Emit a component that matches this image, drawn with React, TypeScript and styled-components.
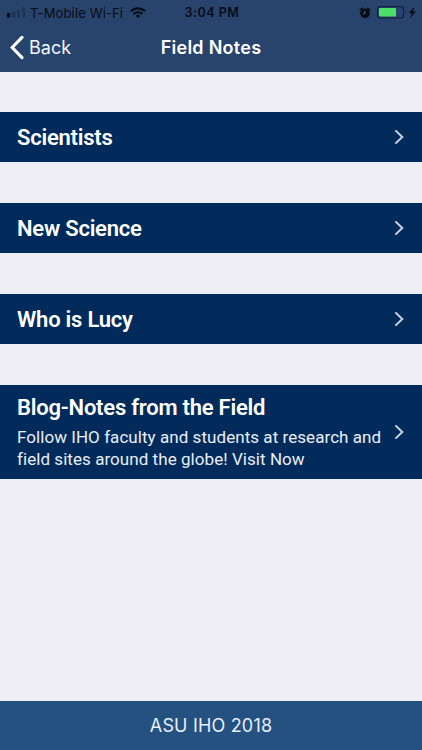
import React from "react";
import styled, { createGlobalStyle } from "styled-components";

const GlobalStyle = createGlobalStyle`
  * { box-sizing: border-box; }
  body { margin: 0; background: #efeef4; }
`;

const Screen = styled.div`
  display: flex;
  flex-direction: column;
  width: 422px;
  height: 750px;
  overflow: hidden;
  background: #efeef4;
  font-family: Roboto, sans-serif;
`;

const Header = styled.header`
  height: 72px;
  flex: none;
  background: #28436c;
  font-family: Inter, sans-serif;
`;

const StatusBar = styled.div`
  display: grid;
  grid-template-columns: 1fr auto 1fr;
  align-items: center;
  height: 24px;
  padding: 0 5px 0 7px;
  color: #070c16;
  font-size: 13px;
  line-height: 24px;
  white-space: nowrap;
`;

const Carrier = styled.div`
  display: flex;
  align-items: center;
  gap: 4px;
  letter-spacing: 0.14px;

  svg:last-child {
    margin-left: 3px;
  }
`;

const Clock = styled.div`
  padding-top: 1px;
  font-weight: 600;
  font-size: 12.5px;
  letter-spacing: 0.5px;
`;

const StatusIcons = styled.div`
  display: flex;
  align-items: center;
  justify-content: flex-end;
`;

const NavBar = styled.div`
  display: grid;
  grid-template-columns: 1fr auto 1fr;
  align-items: center;
  height: 46px;
  padding: 0 9px;
  color: #fff;
`;

const BackButton = styled.div`
  display: flex;
  align-items: center;
  gap: 5px;
  font-size: 18px;
  color: #f2f6ff;
  letter-spacing: 0.05px;
`;

const Title = styled.div`
  font-size: 18px;
  font-weight: 600;
  letter-spacing: 0.26px;
`;

const List = styled.main`
  flex: 1;
  display: flex;
  flex-direction: column;
  gap: 41px;
  padding-top: 39.5px;
`;

const Row = styled.div<{ $tall?: boolean }>`
  display: flex;
  align-items: center;
  justify-content: space-between;
  height: ${(p) => (p.$tall ? "94px" : "50px")};
  flex: none;
  padding: ${(p) => (p.$tall ? "0 18px 0 17px" : "1px 18px 0 17px")};
  background: #022b5b;
  color: #fff;
`;

const RowText = styled.div<{ $tall?: boolean }>`
  padding-top: ${(p) => (p.$tall ? "0" : "2px")};
`;

const Heading = styled.div`
  font-size: 22px;
  font-weight: 600;
  line-height: 28px;
  letter-spacing: -0.23px;
  white-space: nowrap;
`;

const Detail = styled.div`
  margin-top: 4px;
  font-size: 17px;
  line-height: 22px;
  letter-spacing: 0.055px;
  color: #e9eef8;
  white-space: nowrap;
`;

const Footer = styled.footer`
  height: 49px;
  flex: none;
  display: flex;
  align-items: center;
  justify-content: center;
  background: #255180;
  color: #e6effa;
  font-family: Inter, sans-serif;
  font-size: 18px;
  letter-spacing: 0.18px;
`;

const Signal = () => (
  <svg width="19" height="11" viewBox="0 0 19 11">
    <rect x="0" y="6" width="3.2" height="4.4" rx="0.6" fill="#070c16" />
    <rect x="5" y="4.5" width="3.2" height="6" rx="0.6" fill="#1e3558" />
    <rect x="10" y="2.5" width="3.2" height="8" rx="0.6" fill="#1e3558" />
    <rect x="15" y="0" width="3.2" height="10.5" rx="0.6" fill="#1e3558" />
  </svg>
);

const Wifi = () => (
  <svg width="16" height="12" viewBox="0 0 16 12" fill="none" stroke="#070c16" strokeWidth="2.1">
    <path d="M1 4.2a10 10 0 0 1 14 0" />
    <path d="M3.6 7.1a6.3 6.3 0 0 1 8.8 0" />
    <path d="M8 11.1 5.8 8.9a3.1 3.1 0 0 1 4.4 0Z" fill="#070c16" stroke="none" />
  </svg>
);

const Alarm = () => (
  <svg width="12" height="12" viewBox="0 0 12 12">
    <circle cx="6" cy="6.3" r="4.8" fill="#070c16" />
    <path d="M1.2 3 3.2 1.2M8.8 1.2l2 1.8" stroke="#070c16" strokeWidth="1.5" strokeLinecap="round" />
    <path d="M6 3.8v2.9H4.2" fill="none" stroke="#5c7395" strokeWidth="0.9" />
  </svg>
);

const Battery = () => (
  <svg width="46" height="13" viewBox="0 0 46 13">
    <rect x="6.6" y="0.6" width="25.8" height="11.4" rx="2.6" fill="none" stroke="#12223e" strokeWidth="1.1" />
    <rect x="8" y="2" width="17" height="8.6" rx="1" fill="#4de069" />
    <path d="M34 4.5q1.7 2 0 4Z" fill="#12223e" />
    <path d="m43.3 1-5.4 6h2.7l-1.4 5 5.6-6.4h-2.8Z" fill="#070c16" />
  </svg>
);

const BackChevron = () => (
  <svg width="15" height="25" viewBox="0 0 15 25" fill="none" stroke="#fff" strokeWidth="3.1" strokeLinecap="round" strokeLinejoin="miter">
    <path d="M13 2.4 3.2 12.5 13 22.6" />
  </svg>
);

const Disclosure = () => (
  <svg width="10" height="16" viewBox="0 0 10 16" fill="none" stroke="#cbd4e6" strokeWidth="2">
    <path d="m1.4 1.4 6.9 6.6-6.9 6.6" />
  </svg>
);

const sections = [
  { title: "Scientists" },
  { title: "New Science" },
  { title: "Who is Lucy" },
  {
    title: "Blog-Notes from the Field",
    detail: ["Follow IHO faculty and students at research and", "field sites around the globe! Visit Now"],
  },
];

export default function App() {
  return (
    <>
      <GlobalStyle />
      <Screen>
        <Header>
          <StatusBar>
            <Carrier>
              <Signal />
              <span>T-Mobile Wi-Fi</span>
              <Wifi />
            </Carrier>
            <Clock>3:04 PM</Clock>
            <StatusIcons>
              <Alarm />
              <Battery />
            </StatusIcons>
          </StatusBar>
          <NavBar>
            <BackButton>
              <BackChevron />
              Back
            </BackButton>
            <Title>Field Notes</Title>
          </NavBar>
        </Header>
        <List>
          {sections.map(({ title, detail }) => (
            <Row key={title} $tall={!!detail}>
              <RowText $tall={!!detail}>
                <Heading>{title}</Heading>
                {detail && (
                  <Detail>
                    {detail[0]}
                    <br />
                    {detail[1]}
                  </Detail>
                )}
              </RowText>
              <Disclosure />
            </Row>
          ))}
        </List>
        <Footer>ASU IHO 2018</Footer>
      </Screen>
    </>
  );
}
